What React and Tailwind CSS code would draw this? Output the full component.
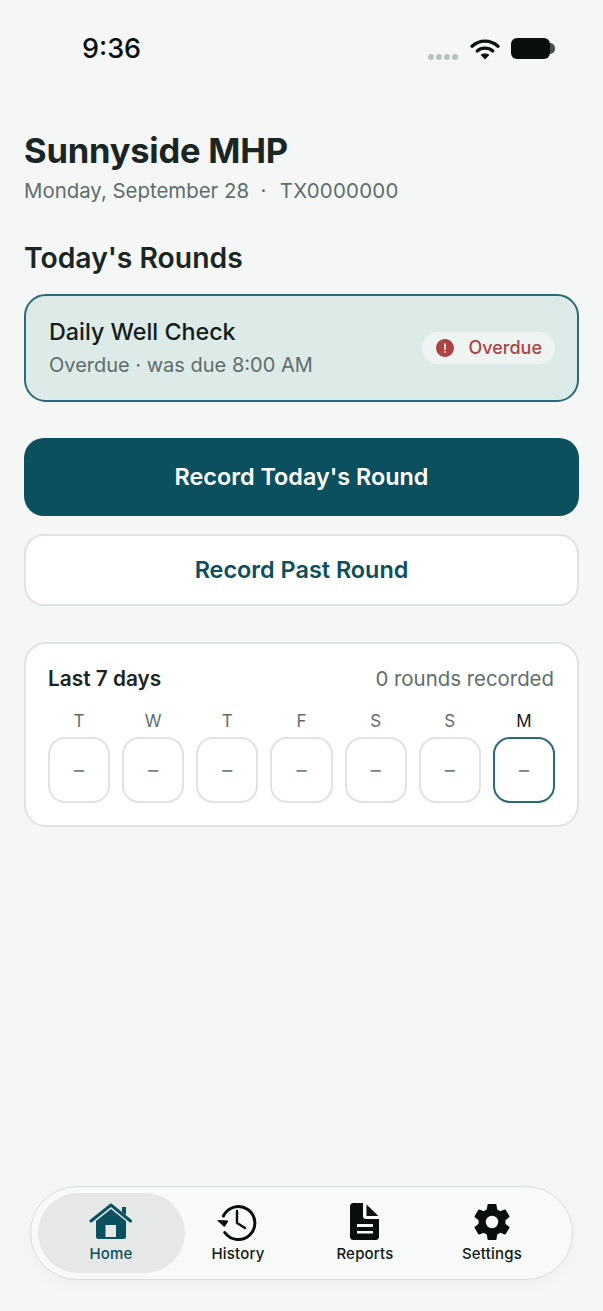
import React from "react";
import { IoSettingsSharp, IoAlertCircle } from "react-icons/io5";

function HomeIcon() {
  return (
    <svg width="44" height="40" viewBox="0 0 44 40" fill="none">
      <path d="M2 19 L22 3 L41.5 19" stroke="#0b505e" strokeWidth="3" strokeLinecap="round" strokeLinejoin="round" />
      <path d="M33 5 H37 V13 L33 10 Z" fill="#0b505e" />
      <path fillRule="evenodd" clipRule="evenodd" d="M22 7 L37 19 V34.5 Q37 37 34.5 37 H9.5 Q7 37 7 34.5 V19 Z M16.5 23 V35 H27 V23 Z" fill="#0b505e" />
    </svg>
  );
}

function HistoryIcon() {
  return (
    <svg width="42" height="38" viewBox="-4 0 42 38" fill="none">
      <path d="M2.4 13 A16.5 16.5 0 1 1 3.8 29.5" stroke="#0a0f0e" strokeWidth="3" strokeLinecap="round" />
      <path d="M-3.2 17.5 L7 18 L3.3 23.6 Z" fill="#0a0f0e" stroke="#0a0f0e" strokeWidth="1" strokeLinejoin="round" />
      <path d="M16 8 V20 L24 25" stroke="#0a0f0e" strokeWidth="2.4" strokeLinecap="round" strokeLinejoin="round" />
    </svg>
  );
}

function DocIcon() {
  return (
    <svg width="30" height="38" viewBox="0 0 30 38" fill="none">
      <path fillRule="evenodd" clipRule="evenodd" d="M3.5 0 H13 V13 Q13 16 16 16 H29 V33.5 Q29 37 25.5 37 H3.5 Q0 37 0 33.5 V3.5 Q0 0 3.5 0 Z M7 21 V24 H23 V21 Z M7 28 V30.6 H23 V28 Z" fill="#0a0f0e" />
      <path d="M16.5 1.5 L28.5 13 H16.5 Z" fill="#0a0f0e" />
    </svg>
  );
}

function Wifi() {
  return (
    <svg width="30" height="22" viewBox="0 0 30 22" fill="none">
      <path d="M2 8.2 C9.5 1.4 20.5 1.4 28 8.2" stroke="#0a0f0e" strokeWidth="3.2" strokeLinecap="round" />
      <path d="M7.2 13 C11.6 9.2 18.4 9.2 22.8 13" stroke="#0a0f0e" strokeWidth="3.2" strokeLinecap="round" />
      <path d="M15 21.5 L10.6 17 C13 15.1 17 15.1 19.4 17 Z" fill="#0a0f0e" />
    </svg>
  );
}

const days = ["T", "W", "T", "F", "S", "S", "M"];

function NavItem({ icon, label, active }) {
  return (
    <div className={`flex flex-col items-center justify-center h-20 rounded-[40px] gap-0.5 ${active ? "-mx-[10px] bg-[#e5e8e7] text-[#0b505e]" : "text-[#101716]"}`}>
      <div className="h-10 flex items-center justify-center">{icon}</div>
      <span className="text-[15px] leading-5 font-medium tracking-[0.2px]">{label}</span>
    </div>
  );
}

export default function App() {
  return (
    <div className="w-[603px] h-[1311px] bg-[#f5f7f6] flex flex-col overflow-hidden" style={{ fontFamily: "Inter, sans-serif" }}>
      <div className="h-[96px] flex items-start justify-between pl-[82px] pr-[48px] pt-[33px]">
        <span className="text-[27px] leading-8 font-medium text-[#0a0f0e]">9:36</span>
        <div className="flex items-start mt-[5px]">
          <div className="flex gap-[2px] mt-[16px] mr-[12px]">
            {[0, 1, 2, 3].map((i) => (
              <span key={i} className="w-[6px] h-[6px] rounded-full bg-[#b8c2bf]" />
            ))}
          </div>
          <Wifi />
          <div className="ml-[11px] w-[39px] h-[21px] rounded-[6px] bg-[#0a0f0e]" />
          <div className="mt-[5px] w-[5px] h-[11px] rounded-r-full bg-[#44504f]" />
        </div>
      </div>

      <div className="flex flex-col px-6 pt-[30px]">
        <h1 className="text-[34.5px] leading-[50px] font-bold text-[#1a2624] tracking-[-0.2px]">Sunnyside MHP</h1>
        <p className="text-[20.4px] leading-[30px] text-[#5f6d6b] whitespace-pre">Monday, September 28  ·  <span className="ml-[2px] tracking-[0.25px]">TX0000000</span></p>
        <h2 className="text-[28.3px] leading-[40px] font-semibold text-[#1a2624] mt-[32px]">Today's Rounds</h2>

        <div className="mt-[16px] h-[108px] rounded-[22px] border-2 border-[#2a6a78] bg-[#dcebe8] flex items-center justify-between pl-[23px] pr-[22px]">
          <div className="flex flex-col">
            <span className="text-[23.3px] leading-8 font-medium text-[#141d1b]">Daily Well Check</span>
            <span className="mt-[2px] text-[20px] leading-[30px] text-[#5f6d6b]">Overdue · was due 8:00 AM</span>
          </div>
          <div className="h-8 rounded-full bg-[#eef4f2] flex items-center pl-[13px] pr-[13px] gap-[13px]">
            <IoAlertCircle size={22} color="#a94442" className="-mx-px" />
            <span className="text-[18px] leading-6 font-medium text-[#a94442]">Overdue</span>
          </div>
        </div>

        <button className="mt-[36px] h-[78px] rounded-[20px] bg-[#0b505e] text-white text-[23.4px] font-semibold">Record Today's Round</button>
        <button className="mt-[18px] h-[72px] rounded-[20px] bg-white border-2 border-[#dfe4e2] text-[#0b505e] text-[23.4px] font-semibold">Record Past Round</button>

        <div className="mt-[36px] h-[185px] rounded-[22px] bg-white border-2 border-[#dfe4e2] px-[22px] pt-[19px]">
          <div className="flex items-center justify-between h-[32px] pr-px">
            <span className="text-[20.8px] font-semibold text-[#1a2624]">Last 7 days</span>
            <span className="text-[20.4px] text-[#5f6d6b]">0 rounds recorded</span>
          </div>
          <div className="grid grid-cols-7 gap-3 mt-[14px]">
            {days.map((d, i) => {
              const today = i === 6;
              return (
                <div key={i} className="flex flex-col items-center">
                  <span className={`text-[17px] leading-6 ${today ? "text-[#141d1b]" : "text-[#5f6d6b]"}`}>{d}</span>
                  <div className={`mt-[4px] w-full h-[66px] rounded-[17px] border-2 flex items-center justify-center text-[20px] text-[#75827f] bg-white ${today ? "border-[#2a6a78]" : "border-[#dfe4e2]"}`}>–</div>
                </div>
              );
            })}
          </div>
        </div>
      </div>

      <div className="mt-auto mb-[31px] mx-[30px] h-[94px] rounded-[47px] border border-[#d8dedc] bg-[#f8faf9] shadow-[0_6px_16px_rgba(0,0,0,0.03)] flex items-center justify-center">
        <div className="grid grid-cols-4 w-[508px]">
          <NavItem active label="Home" icon={<HomeIcon />} />
          <NavItem label="History" icon={<HistoryIcon />} />
          <NavItem label="Reports" icon={<DocIcon />} />
          <NavItem label="Settings" icon={<IoSettingsSharp size={40} color="#0a0f0e" />} />
        </div>
      </div>
    </div>
  );
}
